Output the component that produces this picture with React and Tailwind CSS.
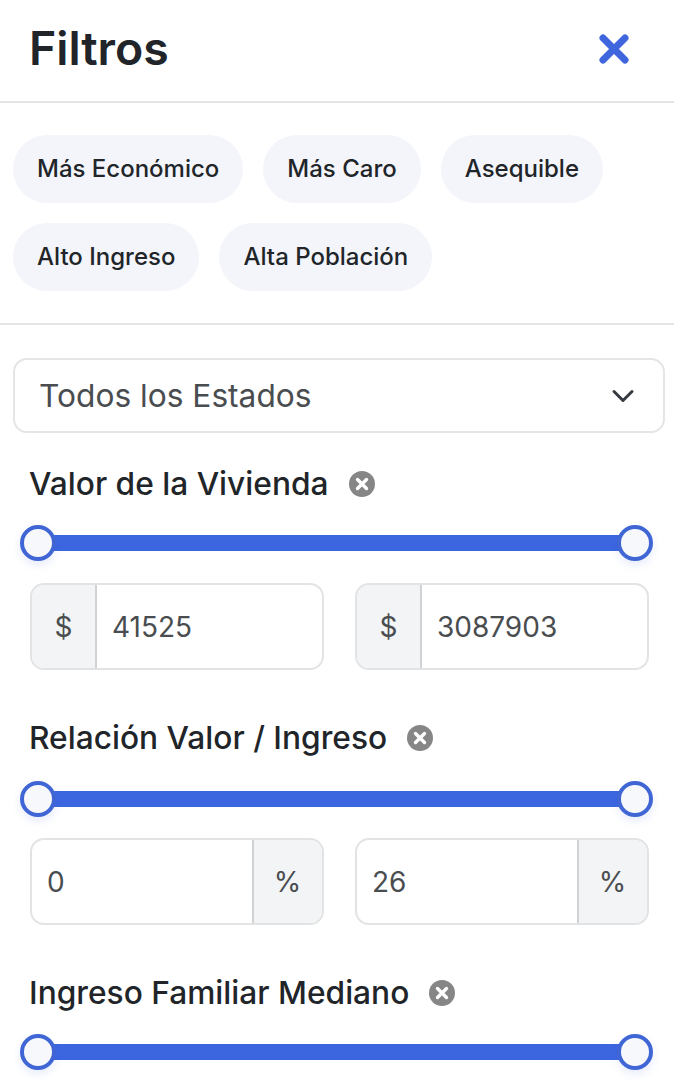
import React from 'react';

const font = "font-['Inter',sans-serif]";

const chips = [
    ['Más Económico', 'Más Caro', 'Asequible'],
    ['Alto Ingreso', 'Alta Población'],
];

const Chip = ({ label }) => (
    <button className="h-[68px] px-[24px] rounded-full bg-[#f3f5fa] text-[24px] font-medium text-[#212529] whitespace-nowrap">
        {label}
    </button>
);

const ClearIcon = () => (
    <svg width="26" height="26" viewBox="0 0 26 26" className="shrink-0">
        <circle cx="13" cy="13" r="13" fill="#868686" />
        <path d="M8.5 8.5 17.5 17.5M17.5 8.5 8.5 17.5" stroke="#fff" strokeWidth="3.4" strokeLinecap="round" />
    </svg>
);

const RangeSlider = () => (
    <div className="relative h-9 ml-[38px] mr-[39px] flex items-center">
        <div className="w-full h-4 bg-[#3c66e0]" />
        <span className="absolute left-0 top-0 w-9 h-9 -translate-x-[18px] rounded-full bg-[#f7f8fc] border-[4px] border-[#3f66d4] shadow-[0_4px_8px_rgba(60,100,220,0.12)]" />
        <span className="absolute right-0 top-0 w-9 h-9 translate-x-[18px] rounded-full bg-[#f7f8fc] border-[4px] border-[#3f66d4] shadow-[0_4px_8px_rgba(60,100,220,0.12)]" />
    </div>
);

const Addon = ({ children, side, width }) => (
    <span
        className={`h-full flex items-center justify-center bg-[#f2f4f6] border-[#d0d2d4] text-[#4a4d50] text-[28px] ${width} ${side === 'left' ? 'border-r-2' : 'border-l-2'}`}
    >
        {children}
    </span>
);

const NumberField = ({ value, prefix, suffix, width }) => (
    <div className="w-[293.5px] h-[87px] flex items-center overflow-hidden rounded-[14px] border-2 border-[#e1e3e5] bg-white">
        {prefix && <Addon side="left" width="w-[65px]">{prefix}</Addon>}
        <span className="flex-1 px-[15px] text-[28px] text-[#4a4d50]">{value}</span>
        {suffix && <Addon side="right" width={width}>{suffix}</Addon>}
    </div>
);

const FilterLabel = ({ children }) => (
    <div className="h-9 pl-[29px] flex items-center gap-[20px]">
        <span className="text-[31.7px] font-medium text-[#212529] whitespace-nowrap">{children}</span>
        <ClearIcon />
    </div>
);

export default function App() {
    return (
        <div className={`${font} w-[674px] h-[1086px] overflow-hidden bg-white`}>
            <header className="h-[103px] pl-[29px] pr-[44px] pb-[3px] flex items-center justify-between border-b-2 border-[#e4e5e7]">
                <h1 className="text-[46.4px] font-semibold text-[#212529]">Filtros</h1>
                <svg width="32" height="32" viewBox="0 0 32 32">
                    <path d="M5 5 27 27M27 5 5 27" stroke="#3f66dc" strokeWidth="7" strokeLinecap="round" />
                </svg>
            </header>

            <div className="h-[222px] pl-[13px] pt-[32px] flex flex-col gap-5 border-b-2 border-[#e4e5e7]">
                {chips.map((row) => (
                    <div key={row[0]} className="flex gap-5">
                        {row.map((c) => <Chip key={c} label={c} />)}
                    </div>
                ))}
            </div>

            <div className="ml-[13px] w-[652px] mt-[33px] h-[75px] pl-[24px] pr-[28px] flex items-center justify-between rounded-[14px] border-2 border-[#e4e5e7]">
                <span className="text-[31.7px] text-[#4a4d50]">Todos los Estados</span>
                <svg width="24" height="24" viewBox="0 0 16 16" fill="none">
                    <path d="m2 5 6 6 6-6" stroke="#343a40" strokeWidth="2" strokeLinecap="round" strokeLinejoin="round" />
                </svg>
            </div>

            <section className="mt-[33px]">
                <FilterLabel>Valor de la Vivienda</FilterLabel>
                <div className="mt-[23px]"><RangeSlider /></div>
                <div className="mt-[22px] pl-[30px] flex gap-[31.5px]">
                    <NumberField prefix="$" value="41525" />
                    <NumberField prefix="$" value="3087903" />
                </div>
            </section>

            <section className="mt-[50px]">
                <FilterLabel>Relación Valor / Ingreso</FilterLabel>
                <div className="mt-[25px]"><RangeSlider /></div>
                <div className="mt-[21px] pl-[30px] flex gap-[31.5px]">
                    <NumberField suffix="%" width="w-[70px]" value="0" />
                    <NumberField suffix="%" width="w-[70px]" value="26" />
                </div>
            </section>

            <section className="mt-[50px]">
                <FilterLabel>Ingreso Familiar Mediano</FilterLabel>
                <div className="mt-[23px]"><RangeSlider /></div>
            </section>
        </div>
    );
}
